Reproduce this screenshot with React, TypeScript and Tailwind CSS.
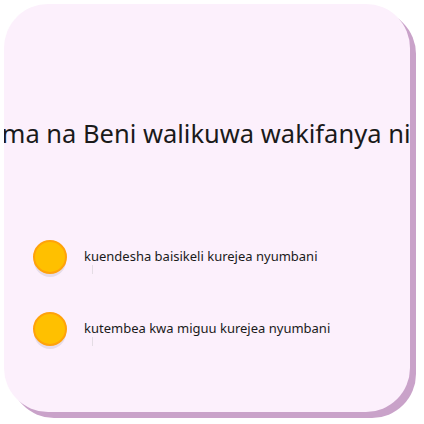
import React from 'react';

const options = [
  'kuendesha baisikeli kurejea nyumbani',
  'kutembea kwa miguu kurejea nyumbani',
];

const App: React.FC = () => {
  return (
    <div className="w-[424px] h-[424px] bg-white p-[4px]" style={{ fontFamily: '"Noto Sans", sans-serif' }}>
      <div className="w-[406px] h-[408px] rounded-[44px] bg-[#fcf0fc] shadow-[6px_6px_0_#c9a2c9] overflow-hidden flex flex-col">
        {/* question */}
        <div className="h-[236px] pt-[112px] flex justify-center overflow-hidden">
          <p className="whitespace-nowrap text-[25.5px] leading-[34px] text-[#1a1a1a] -ml-[2px]">
            ma na Beni walikuwa wakifanya ni
          </p>
        </div>

        {/* answers */}
        <div className="flex flex-col gap-[38px] pl-[29px]">
          {options.map((opt, i) => (
            <div key={i} className="flex items-center h-[34px]">
              <div className="relative w-[34px] h-[34px] shrink-0">
                <div className="absolute left-[1px] top-[5px] w-[32px] h-[32px] rounded-full bg-[#e6dce8]" />
                <div className="absolute inset-0 rounded-full bg-[#ffc000] border-2 border-[#ffa20a]" />
              </div>
              <div className="relative ml-[17px] -mt-[4px]">
                <span className="text-[13px] text-[#1a1a1a]">{opt}</span>
                <div className="absolute left-[8px] top-[22px] w-px h-[9px] bg-[#e4dce4]" />
              </div>
            </div>
          ))}
        </div>
      </div>
    </div>
  );
};

export default App;
